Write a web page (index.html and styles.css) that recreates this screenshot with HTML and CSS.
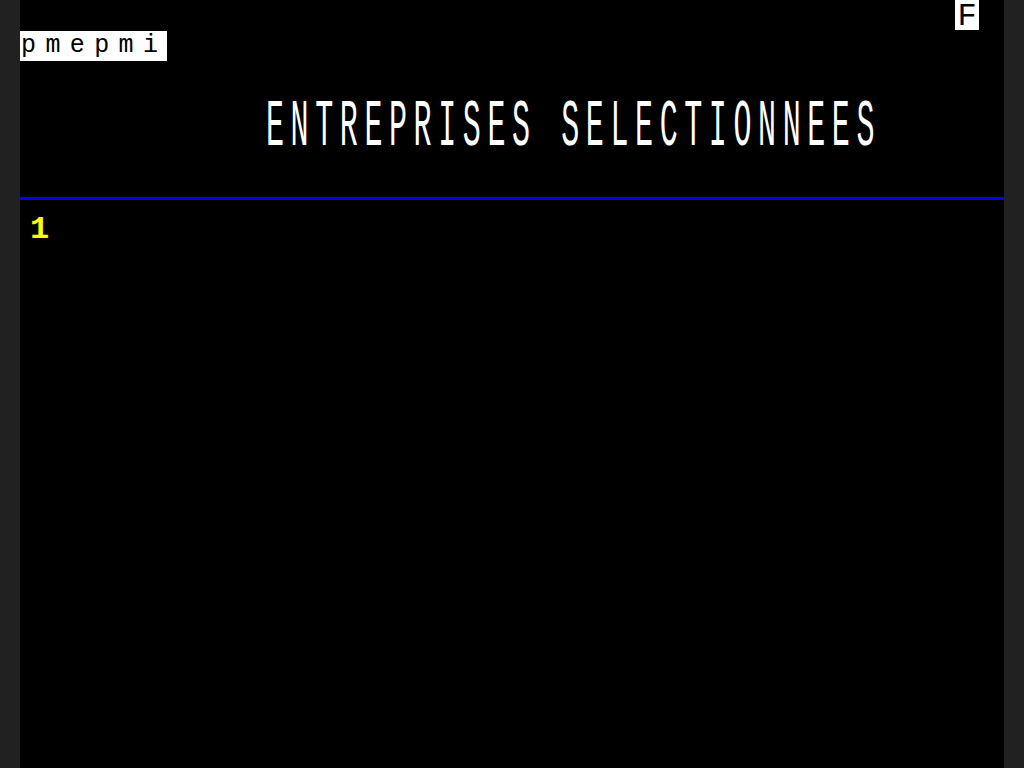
FILE: index.html
```html
<!DOCTYPE html>
<html lang="fr">
<head>
<meta charset="utf-8">
<title>pmepmi</title>
<link rel="stylesheet" href="styles.css">
</head>
<body>
<div class="screen">
  <div class="status-row">
    <span class="status-flag">F</span>
  </div>
  <div class="label-row">
    <span class="service-label">pmepmi</span>
  </div>
  <div class="title-row">
    <h1 class="title">ENTREPRISES SELECTIONNEES</h1>
  </div>
  <div class="rule"></div>
  <div class="list">
    <div class="list-item">1</div>
  </div>
</div>
</body>
</html>
```

FILE: styles.css
```css
html, body {
  margin: 0;
  padding: 0;
  background: #212121;
  height: 100%;
  overflow: hidden;
}

.screen {
  width: 984px;
  height: 768px;
  margin: 0 auto;
  background: #000;
  font-family: "Liberation Mono", "DejaVu Sans Mono", monospace;
  color: #fff;
}

.status-row {
  height: 31px;
  display: flex;
  justify-content: flex-end;
  padding-right: 25px;
}

.status-flag {
  width: 24px;
  height: 30px;
  background: #fff;
  color: #000;
  font-size: 32px;
  line-height: 34px;
  text-align: center;
}

.label-row {
  height: 30px;
  display: flex;
}

.service-label {
  height: 30px;
  background: #fff;
  color: #000;
  font-size: 25px;
  line-height: 30px;
  letter-spacing: 9.4px;
  padding-left: 1px;
  white-space: nowrap;
}

.title-row {
  height: 136px;
  padding-left: 246px;
  box-sizing: border-box;
}

.title {
  margin: 0;
  padding-top: 56px;
  font-weight: normal;
  font-size: 30px;
  line-height: 30px;
  letter-spacing: 6.6px;
  white-space: nowrap;
  transform: scaleY(2.2);
  transform-origin: 0 75px;
}

.rule {
  height: 3px;
  background: #0000f0;
}

.list {
  padding: 14px 0 0 10px;
}

.list-item {
  color: #ffff00;
  font-weight: bold;
  font-size: 32px;
  line-height: 32px;
}
```
